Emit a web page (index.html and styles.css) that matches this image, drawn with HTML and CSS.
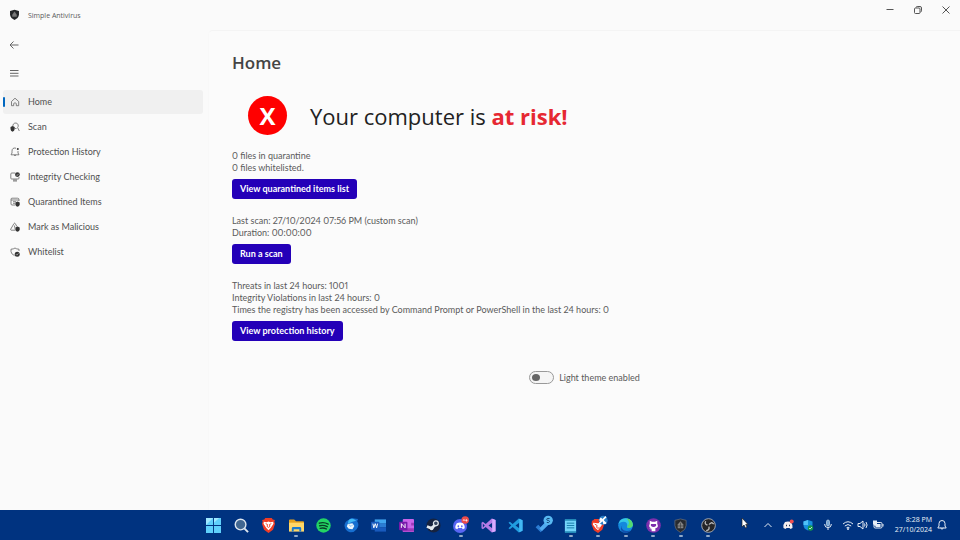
FILE: index.html
```html
<!DOCTYPE html>
<html lang="en">
<head>
<meta charset="utf-8">
<title>Simple Antivirus</title>
<link rel="stylesheet" href="styles.css">
</head>
<body>
<div class="window">
  <header class="titlebar">
    <svg class="app-logo" viewBox="0 0 16 16"><path fill="#242628" d="M8 1 14.500 3 V8 C14.500 12 11 14.500 8 16 C5 14.500 1.500 12 1.500 8 V3Z"/><path d="M8 4 11 8.500V11H5V8.500Z M6 8h4" fill="#777" stroke="#888" stroke-width=".5"/></svg>
    <span class="app-name">Simple Antivirus</span>
    <div class="window-controls">
      <button aria-label="Minimize"><svg viewBox="0 0 10 10"><path d="M1.500 4.500h7"/></svg></button>
      <button aria-label="Restore"><svg viewBox="0 0 10 10"><rect x="1.500" y="3" width="5.500" height="5.500" rx="1"/><path d="M3 2.500Q3.200 1.500 4.200 1.500H7Q8.500 1.500 8.500 3V5.800Q8.500 6.800 7.500 7"/></svg></button>
      <button aria-label="Close"><svg viewBox="0 0 10 10"><path d="M1.500 1.500l7 7M8.500 1.500l-7 7"/></svg></button>
    </div>
  </header>
  <div class="body">
    <aside class="sidebar">
      <button class="icon-button" aria-label="Back"><svg viewBox="0 0 10 10"><path d="M9.500 5H1M4.500 1.500L1 5l3.500 3.500"/></svg></button>
      <button class="icon-button" aria-label="Menu"><svg viewBox="0 0 10 10"><path d="M1 2.500h8.500M1 5.300h8.500M1 8h8.500"/></svg></button>
      <nav class="nav">
        <a href="#" class="nav-item current" aria-current="page"><svg viewBox="0 0 10 10"><path d="M1.500 4.500 5 1.200l3.700 3.300V8.700H6.300V6.500Q5 5 3.700 6.500v2.200H1.500Z"/></svg>Home</a>
        <a href="#" class="nav-item"><svg viewBox="0 0 10 10"><path d="M3 4.500A2.700 2.700 0 1 1 7.600 5.500L9.300 9M6.500 6.500H5"/><path class="solid" d="M2.500 4 4.700 5v2Q4.500 9 2.500 9.700.500 9 .500 7V5Z"/></svg>Scan</a>
        <a href="#" class="nav-item"><svg viewBox="0 0 10 10"><path d="M6 1.200Q2 .300 2 4.200V6L1 7.800h8L8 6V4M4 8q1 1.600 2 0"/><circle class="solid" cx="7.800" cy="2" r="1"/></svg>Protection History</a>
        <a href="#" class="nav-item"><svg viewBox="0 0 10 10"><path d="M5 1H1.800Q.800 1 .800 2v4.300Q.800 7 1.700 7h6.500Q9 7 9 6V5M4 7v2M6 7v2M3 9h4"/><circle class="solid" cx="7.400" cy="2.600" r="2.400"/><path class="mark" d="M6.300 2.700l.8.800 1.500-1.700"/></svg>Integrity Checking</a>
        <a href="#" class="nav-item"><svg viewBox="0 0 10 10"><path d="M5 8H2Q1 8 1 7V2.200Q1 1.200 2 1.200h5.500Q9 1.200 9 2.500V4M1 3h8M3 4.700h3M3 6.300h2"/><path class="solid" d="M7.500 4.500 9.700 5.400v2Q9.500 9 7.500 9.800 5.400 9 5.400 7.400v-2Z"/></svg>Quarantined Items</a>
        <a href="#" class="nav-item"><svg viewBox="0 0 10 10"><path d="M5.400 8.200H1.200Q.300 8 .800 7L4 1.500Q4.600.700 5.200 1.500L7 4.600M4.600 3.500v2.200M4.600 6.500v.7"/><path class="solid" d="M7.500 4.500 9.700 5.400v2Q9.500 9 7.500 9.800 5.400 9 5.400 7.400v-2Z"/></svg>Mark as Malicious</a>
        <a href="#" class="nav-item"><svg viewBox="0 0 10 10"><path d="M4.500 8.600Q1 7 1 4.500V2.200Q3.500 2.200 5 1q1.500 1.200 4 1.200V4"/><circle class="solid" cx="7.200" cy="7.200" r="2.500"/><path class="mark" d="M6 7.300l.8.800 1.600-1.700"/></svg>Whitelist</a>
      </nav>
    </aside>
    <main class="content">
      <h1>Home</h1>
      <div class="status"><span class="status-badge">X</span><p>Your computer is <strong>at risk!</strong></p></div>
      <section class="group">
        <p>0 files in quarantine</p>
        <p>0 files whitelisted.</p>
        <button class="primary">View quarantined items list</button>
      </section>
      <section class="group">
        <p>Last scan: 27/10/2024 07:56 PM (custom scan)</p>
        <p>Duration: 00:00:00</p>
        <button class="primary">Run a scan</button>
      </section>
      <section class="group">
        <p>Threats in last 24 hours: 1001</p>
        <p>Integrity Violations in last 24 hours: 0</p>
        <p>Times the registry has been accessed by Command Prompt or PowerShell in the last 24 hours: 0</p>
        <button class="primary">View protection history</button>
      </section>
      <label class="theme" for="theme"><input type="checkbox" role="switch" id="theme">Light theme enabled</label>
    </main>
  </div>
</div>
<footer class="taskbar">
  <div class="apps">
    <button aria-label="Start"><svg viewBox="0 0 16 16"><path fill="#5fd0fb" d="M0 0h7.500v7.500H0zM8.500 0H16v7.500H8.500zM0 8.500h7.500V16H0zM8.500 8.500H16V16H8.500z"/><path fill="#a0e8ff" d="M0 0h7.500L0 7.500zM8.500 0H14L8.500 5z"/></svg></button>
    <button aria-label="Search"><svg viewBox="0 0 16 16"><circle cx="7" cy="7" r="5.700" fill="#416791" stroke="#dce5ee" stroke-width="1.500"/><path d="M11 11l4 4" stroke="#dce5ee" stroke-width="2"/></svg></button>
    <button aria-label="Brave"><svg viewBox="0 0 16 16"><path fill="#ef3d26" d="M4.500 0h7l1 1.500 2.300.5-.5 2 .7 2-2.200 6.500L8 16l-4.800-3.500L1 6l.7-2-.5-2 2.300-.5z"/><path fill="#fff" d="M3 4l3 .5 2-.7 2 .7 3-.5.3 2-2.800 4.500L8 13l-2.500-2.500L2.700 6z"/><path d="M5 6l2 1-.5 2L8 10l1.500-1L9 7l2-1" fill="none" stroke="#ef3d26"/></svg></button>
    <button class="open" aria-label="File Explorer"><svg viewBox="0 0 16 16"><path fill="#e5a11d" d="M0 2.500Q0 1.500 1 1.500h4.500l2 2H15q1 0 1 1V8H0z"/><path fill="#ffd768" d="M0 5h16v9.500H0z"/><path fill="#1979cf" d="M3 14.500V11q0-1.500 1.500-1.500h7Q13 9.500 13 11v3.500h-2V12H5v2.500z"/></svg></button>
    <button aria-label="Spotify"><svg viewBox="0 0 16 16"><circle cx="8" cy="8" r="7.700" fill="#23d464"/><path d="M3.500 5.500q5-1.500 9.500 1M4 8.300q4-1.200 8 1M4.500 11q3.500-1 6.500.7" fill="none" stroke="#073e25" stroke-width="1.500" stroke-linecap="round"/></svg></button>
    <button aria-label="Thunderbird"><svg viewBox="0 0 16 16"><path fill="#176fd0" d="M.500 8Q1 3 5 2q3-3 6-1.500L15 1l-1 2.500q3 4-.5 8.500-3 4-8 3-4.500-2-5-7"/><path fill="#42b9f5" d="M5 2q4-3 8 1L9 4 4 6z"/><path fill="#edf5fc" d="M4 6.500l5-1 2 3-2 3.500-4-.5-2-2.500z"/><path d="M5 7l2.500 2L9.500 7" fill="none" stroke="#7dbcf0"/></svg></button>
    <button aria-label="Word"><svg viewBox="0 0 16 16"><path fill="#41a5ee" d="M4 1.500h12V6H4z"/><path fill="#2b7cd3" d="M4 6h12v4H4z"/><path fill="#185abd" d="M4 10h12v4.500H4z"/><rect y="4" width="9" height="8.500" rx="1" fill="#185abd"/><path d="M2 6l1 4.500L4.500 6 6 10.500 7 6" stroke="#fff" fill="none"/></svg></button>
    <button aria-label="OneNote"><svg viewBox="0 0 16 16"><rect x="4" y="1" width="12" height="14" rx="1" fill="#ca64ea"/><path fill="#9c38b9" d="M13 5h3v3h-3zM4 11h12v3.500H4z"/><rect y="4" width="9" height="9" rx="1" fill="#7719aa"/><path d="M2.500 10.500V6L6.500 10.500V6" stroke="#fff" fill="none"/></svg></button>
    <button aria-label="Steam"><svg viewBox="0 0 16 16"><circle cx="8" cy="8" r="7.500" fill="#16233f"/><path d="M1 9l5 2 5-5" stroke="#e2e9ef" stroke-width="3" fill="none"/><circle cx="10.500" cy="5.700" r="2.600" fill="#34445f" stroke="#e2e9ef" stroke-width="1.300"/><circle cx="6" cy="11" r="2" fill="#e2e9ef"/></svg></button>
    <button class="open" aria-label="Discord"><svg viewBox="0 0 16 16"><circle cx="7.500" cy="8.500" r="7.500" fill="#5865f2"/><path fill="#fff" d="M4 5.500q3.500-1.500 7 0 2 3 1.500 5.500L10.500 12l-1-1.300h-4l-1 1.300-2-1Q2 8.500 4 5.500"/><ellipse cx="5.700" cy="8.800" rx=".9" ry="1.200" fill="#5865f2"/><ellipse cx="9.400" cy="8.800" rx=".9" ry="1.200" fill="#5865f2"/><circle cx="13" cy="2" r="4" fill="#ed4c4a"/><path d="M10.800 3q1-3 1.500 0M13 2.500h2.500M14.300 1.300v2.500" stroke="#fff" stroke-width=".8" fill="none"/></svg></button>
    <button aria-label="Visual Studio"><svg viewBox="0 0 16 16"><path fill="#b67be6" fill-rule="evenodd" d="M11.500.500 15.500 2v12l-4 1.500L5 9.500 2 12 .500 11V5L2 4l3 2.500zM12 5 8 8l4 3zM2 6v4l2-2z"/><path fill="#d9abff" d="M12 .700 15.500 2v12l-3.500 1.300z"/></svg></button>
    <button aria-label="Visual Studio Code"><svg viewBox="0 0 16 16"><path fill="#209cdf" fill-rule="evenodd" d="M11.500.500 15.500 2.500v11l-4 2L5 9.500 2 12l-1.500-1L3.500 8 .500 5 2 4l3 2.500zM12 5 8 8l4 3z"/><path fill="#43b9f5" d="M12 .700 15.500 2.500v11l-3.500 1.800z"/></svg></button>
    <button aria-label="Task checker"><svg viewBox="0 0 16 16"><path d="M1 8.500l4 4 7-7" fill="none" stroke="#2b7cd3" stroke-width="4"/><path d="M5 12.500l7-7" stroke="#51abef" stroke-width="4"/><circle cx="13" cy="2.500" r="5" fill="#58b9f2"/><path d="M14.500.500H12q-1 1.500 0 2h1.500q2 1.500 0 2.300h-2" fill="none" stroke="#123f70"/></svg></button>
    <button class="open" aria-label="Notepad"><svg viewBox="0 0 16 16"><rect x="2" y="1" width="12" height="14.500" rx="1" fill="#74d4fa"/><path fill="#2389b8" d="M2 1h12v2H2zM2 14h12v2H2z"/><path d="M4 5.500h8M4 8h8M4 10.500h8" stroke="#157aa9"/></svg></button>
    <button class="open" aria-label="Brave profile"><svg viewBox="0 0 16 16"><path fill="#ef3d26" d="M3.500 1h7l1 1 2.500.5v4.500l-2 5.500L7.500 16 3 13 .500 7l.5-4 1.500-.5z"/><path fill="#fff" d="M2.500 5 7 5.500 12 5v2l-3 4-1.500 2L5 11 2 7z"/><path d="M4 6.500 6.500 8 6 10l1.500 1L9 10" fill="none" stroke="#ef3d26"/><circle cx="13" cy="2.500" r="4.800" fill="#277bc3"/><path d="M10 0l6 6M16-1.500 9 5.500M9 2l4 .5 1 4" stroke="#fff" stroke-width="1.700" fill="none"/></svg></button>
    <button class="open" aria-label="Edge"><svg viewBox="0 0 16 16"><circle cx="8" cy="8" r="7.800" fill="#1489dc"/><path fill="#36c8e6" d="M.500 7Q2-.500 9 .300 15 1 15.800 7q0 4-5 3.500-2-.5-.8-2Q10 4 6 4 2 4 .500 7"/><path fill="#55d96e" d="M9 .300Q15 1 15.800 7q0 4-5 3.500-2-.5-.8-2Q14 5 9 .300"/><path fill="#1251ae" d="M6 6q-4 4 0 7 4 2 8-.5Q10 17 6 15.500 0 12 6 6"/></svg></button>
    <button class="open" aria-label="GitHub Desktop"><svg viewBox="0 0 16 16"><circle cx="8" cy="8" r="7.800" fill="#7d2fad"/><path fill="#fff" d="M4 3l2.500 1h3L12 3v3q2 4-2 5v3H6V12Q4 12.500 3.500 11q1 .5 2.500 0Q2 10 4 6z"/><path fill="#7d2fad" d="M5.300 6.500h5.400q1 3-2.700 3t-2.700-3"/></svg></button>
    <button class="open" aria-label="Simple Antivirus"><svg viewBox="0 0 16 16"><path fill="#282b30" stroke="#686e78" stroke-width=".8" d="M8 1 14 2.500V8q0 4.500-6 7.500Q2 12.500 2 8V2.500z"/><path fill="#858585" d="M8 3.500 11 7v4H5V7z"/><path d="M5 8.500h6M8 5v6" stroke="#333" stroke-width=".6"/></svg></button>
    <button class="open" aria-label="OBS Studio"><svg viewBox="0 0 16 16"><circle cx="8" cy="8" r="7.300" fill="#252527" stroke="#bbb" stroke-width=".9"/><path d="M8 8Q3 7 5 3.500M8 8q3-5 5.500-1.500M8 8q2 5-2.500 5.500" fill="none" stroke="#bbb" stroke-width="1.400"/><circle cx="8" cy="8" r="1.300" fill="#252527"/></svg></button>
  </div>
  <svg class="cursor" viewBox="0 0 10 12"><path fill="#fff" stroke="#222" stroke-width=".7" d="M2 1v9l2-2 1.500 3L7 10 5.700 7.500H8z"/></svg>
  <div class="tray">
    <button aria-label="Show hidden icons"><svg viewBox="0 0 12 12"><path d="M2.500 8 6 4.500 9.500 8" class="line"/></svg></button>
    <button aria-label="Discord status"><svg viewBox="0 0 12 12"><path fill="#f5eeee" d="M3 3q3-1 6 0 2 3 1.500 6l-2 1-1-1h-3l-1 1-2-1Q1 5 3 3"/><path d="M4 6.500h1M7 6.500h1" stroke="#243451" stroke-width="1.500"/><circle cx="9.700" cy="2.500" r="2" fill="#f05050"/></svg></button>
    <button aria-label="Windows Security"><svg viewBox="0 0 12 12"><path fill="#1691dc" d="M6 1l4.500 1.500V6Q10 10 6 11.500 1.500 10 1.500 6V2.500z"/><path fill="#4fc2f7" d="M1.500 2.500 6 1v5H1.500z"/><circle cx="8.500" cy="9" r="2.700" fill="#15974c"/><path d="M7 9l1 1 2-2" fill="none" stroke="#fff" stroke-width=".7"/></svg></button>
    <button aria-label="Microphone"><svg viewBox="0 0 12 12"><rect x="4.500" y="1" width="3" height="6" rx="1.500" fill="#79a8d6" stroke="#c4dced" stroke-width=".7"/><path class="line" d="M2.800 5v1Q3 8.500 6 8.500T9.200 6V5M6 8.500V11"/></svg></button>
    <button class="quick" aria-label="Network, volume and battery">
      <svg viewBox="0 0 12 12"><path class="line" d="M1 5q5-4.500 10 0M2.800 7q3.200-3 6.400 0M4.500 8.800q1.500-1.300 3 0"/><circle cx="6" cy="10" r="1" fill="#e6edf5"/></svg>
      <svg viewBox="0 0 12 12"><path class="line" d="M1 4.500h2L6 2v8L3 7.500H1zM7.500 4.500q1 1.500 0 3M9 3q2.200 3 0 6"/></svg>
      <svg viewBox="0 0 12 12"><rect class="line" x="2" y="3.500" width="8" height="5.500" rx="1.200"/><path fill="#e6edf5" d="M3.500 5h5v3h-5zM10.500 5h1v2.500h-1zM1 1.500h4V5L3 7 1 5z"/></svg>
    </button>
    <div class="clock"><time>8:28 PM</time><time>27/10/2024</time></div>
    <button aria-label="Notifications"><svg viewBox="0 0 12 12"><path class="line" d="M3 4.500q0-3 3-3t3 3V7l1.200 2H1.800L3 7zM4.500 9q1.500 2.500 3 0"/></svg></button>
  </div>
</footer>
</body>
</html>
```
FILE: styles.css
```css
* { box-sizing: border-box; }
body {
  margin: 0;
  min-height: 100vh;
  display: flex;
  flex-direction: column;
  background: #fafafa;
  color: #5a5a5a;
  font: 9px/12px Lato, "Open Sans", sans-serif;
  font-variant-numeric: proportional-nums;
}
button { border: 0; padding: 0; background: none; font: inherit; color: inherit; }
p, h1 { margin: 0; }
svg { display: block; flex: none; }
.window { flex: 1; display: flex; flex-direction: column; }

.titlebar { display: flex; height: 30px; padding-left: 9px; }
.app-logo { width: 11px; height: 11px; margin-top: 9px; }
.app-name { font: 7px/12px "Open Sans", sans-serif; margin: 10px 0 0 8px; }
.window-controls { display: flex; margin-left: auto; height: 20px; }
.window-controls button { width: 28px; display: grid; place-items: center; }
.window-controls svg { width: 10px; height: 10px; fill: none; stroke: #555; stroke-width: 1; }

.body { flex: 1; display: flex; }
.sidebar { width: 208px; padding: 1px 5px 0 3px; }
.icon-button { display: flex; align-items: center; width: 24px; height: 28px; padding-left: 6px; }
.icon-button svg, .nav-item svg { width: 10px; height: 10px; fill: none; stroke: #666; stroke-width: 1; }
.nav { display: flex; flex-direction: column; gap: 1px; padding-top: 3px; }
.nav-item {
  display: flex;
  align-items: center;
  gap: 8px;
  height: 24px;
  padding-left: 7px;
  border-radius: 3px;
  color: #505050;
  text-decoration: none;
  position: relative;
}
.nav-item svg { stroke-width: .8; }
.nav-item .solid { fill: #333; stroke: none; }
.nav-item .mark { stroke: #eee; stroke-width: .6; }
.current { background: #f0f0f0; }
.current::before {
  content: "";
  position: absolute;
  left: 0;
  width: 2px;
  height: 10px;
  border-radius: 1px;
  background: #0067c0;
}

.content {
  flex: 1;
  border-top: 1px solid #f4f4f4;
  border-left: 1px solid #f8f8f8;
  border-top-left-radius: 5px;
  background: #fbfbfb;
  padding: 20px 23px 0;
}
h1 { color: #444; font: 600 17px/24px "Open Sans", sans-serif; }
.status { display: flex; align-items: center; gap: 23px; margin: 21px 0 15px 16px; color: #222; font: 22px/32px "Open Sans", sans-serif; }
.status strong { color: #e62832; }
.status-badge {
  width: 39px;
  height: 39px;
  border-radius: 50%;
  display: grid;
  place-items: center;
  background: #f00;
  color: #fff;
  font-size: 24px;
  font-weight: 700;
}
.group { margin-bottom: 16px; }
.primary {
  display: block;
  height: 20px;
  margin-top: 5px;
  padding: 0 8px;
  border-radius: 3px;
  background: #2400b8;
  color: #fff;
  font-weight: 700;
}
.theme { display: flex; align-items: center; justify-content: center; gap: 5px; margin: 30px 0 0; }
.theme input {
  appearance: none;
  width: 25px;
  height: 13px;
  margin: 0;
  padding: 2px;
  border: 1px solid #999;
  border-radius: 7px;
  background: #f5f5f5;
}
.theme input::before { content: ""; display: block; width: 8px; height: 7px; border-radius: 50%; background: #666; }
.theme input:checked::before { margin-left: auto; }

.taskbar { display: flex; height: 30px; padding-left: 200px; background: #003380; color: #eef3f8; }
.apps { flex: 1; display: grid; grid-template-columns: repeat(19, 1fr); }
.apps button { position: relative; display: grid; place-items: center; }
.apps svg { width: 15px; height: 15px; overflow: visible; }
.open::after {
  content: "";
  position: absolute;
  bottom: 3px;
  left: 50%;
  width: 4px;
  height: 2px;
  margin-left: -2px;
  border-radius: 1px;
  background: #8fa9c9;
}
.cursor { width: 10px; height: 12px; margin: 7px 4px 0 18px; }
.tray { display: flex; align-items: center; padding: 0 8px 0 4px; }
.tray button { width: 20px; display: grid; place-items: center; }
.tray svg { width: 12px; height: 12px; }
.tray .line { fill: none; stroke: #e6edf5; stroke-width: 1; }
.tray .quick { width: 42px; display: flex; justify-content: space-between; margin-left: 4px; }
.clock { display: flex; flex-direction: column; width: 48px; text-align: right; font: 7px/10px "Open Sans", sans-serif; }
```
